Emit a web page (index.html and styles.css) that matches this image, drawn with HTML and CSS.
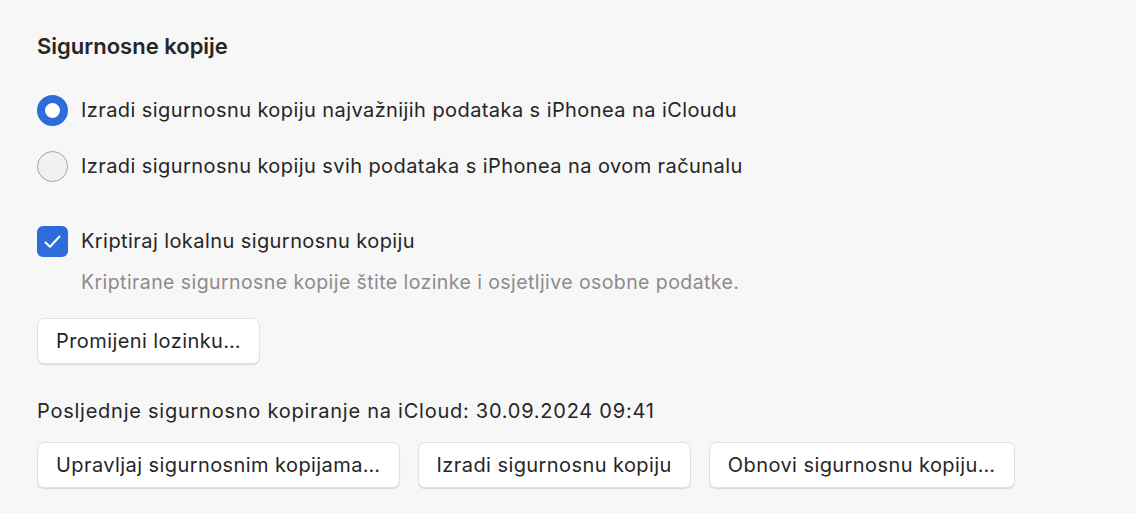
FILE: index.html
```html
<!DOCTYPE html>
<html lang="hr">

<head>
    <meta charset="UTF-8">
    <title>Sigurnosne kopije</title>
    <link rel="stylesheet" href="styles.css">
</head>

<body>
    <div class="panel">
        <h2 class="title">Sigurnosne kopije</h2>

        <div class="options">
            <label class="row">
                <span class="radio on"></span>
                <span>Izradi sigurnosnu kopiju najvažnijih podataka s iPhonea na iCloudu</span>
            </label>
            <label class="row">
                <span class="radio"></span>
                <span>Izradi sigurnosnu kopiju svih podataka s iPhonea na ovom računalu</span>
            </label>
        </div>

        <label class="row check-row">
            <span class="check">
                <svg width="31" height="31" viewBox="0 0 31 31"><path d="M8.5 16.5 L13 20.8 L22.5 10.5" fill="none" stroke="#fff" stroke-width="2" stroke-linecap="round" stroke-linejoin="round"/></svg>
            </span>
            <span>Kriptiraj lokalnu sigurnosnu kopiju</span>
        </label>
        <p class="hint">Kriptirane sigurnosne kopije štite lozinke i osjetljive osobne podatke.</p>

        <a href="javascript:void(0);" class="btn btn-pass">Promijeni lozinku…</a>

        <p class="last">Posljednje sigurnosno kopiranje na iCloud: 30.09.2024 09:41</p>

        <div class="btns">
            <a href="javascript:void(0);" class="btn">Upravljaj sigurnosnim kopijama…</a>
            <a href="javascript:void(0);" class="btn">Izradi sigurnosnu kopiju</a>
            <a href="javascript:void(0);" class="btn">Obnovi sigurnosnu kopiju…</a>
        </div>
    </div>
</body>

</html>
```

FILE: styles.css
```css
* {
    margin: 0;
    padding: 0;
    box-sizing: border-box;
}

html,
body {
    height: 100%;
}

body {
    background: #f7f7f7;
    font-family: Inter, "Noto Sans", sans-serif;
    color: #262626;
    font-size: 20px;
    letter-spacing: 0.42px;
}

a {
    text-decoration: none;
    color: #262626;
}

.panel {
    padding: 34px 37px 0 37px;
}

.title {
    font-size: 22px;
    font-weight: 600;
    line-height: 24px;
    letter-spacing: 0;
}

.options {
    display: flex;
    flex-direction: column;
    gap: 24px;
    margin-top: 36px;
}

.row {
    display: flex;
    align-items: center;
    gap: 13px;
    height: 32px;
}

.radio {
    width: 31px;
    height: 31px;
    border-radius: 50%;
    border: 1px solid #a3a3a3;
    background: #f1f1f1;
    flex: none;
}

.radio.on {
    border: 8px solid #2e6cdb;
    background: #fff;
}

.check-row {
    margin-top: 43px;
}

.check {
    width: 31px;
    height: 31px;
    border-radius: 6px;
    background: #2e6cdb;
    display: flex;
    flex: none;
}

.hint {
    margin: 13px 0 0 44px;
    line-height: 24px;
    font-size: 19.5px;
    color: #8c8c8c;
}

.btn {
    display: inline-flex;
    align-items: center;
    height: 46px;
    padding: 0 18px;
    background: #fff;
    border: 1px solid #e2e2e2;
    border-radius: 7px;
    box-shadow: 0 1px 1px rgba(0, 0, 0, .12);
}

.btn-pass {
    margin-top: 24px;
}

.last {
    margin-top: 35px;
    line-height: 24px;
    letter-spacing: 0.75px;
}

.btns {
    display: flex;
    gap: 18px;
    margin-top: 19px;
}
```
